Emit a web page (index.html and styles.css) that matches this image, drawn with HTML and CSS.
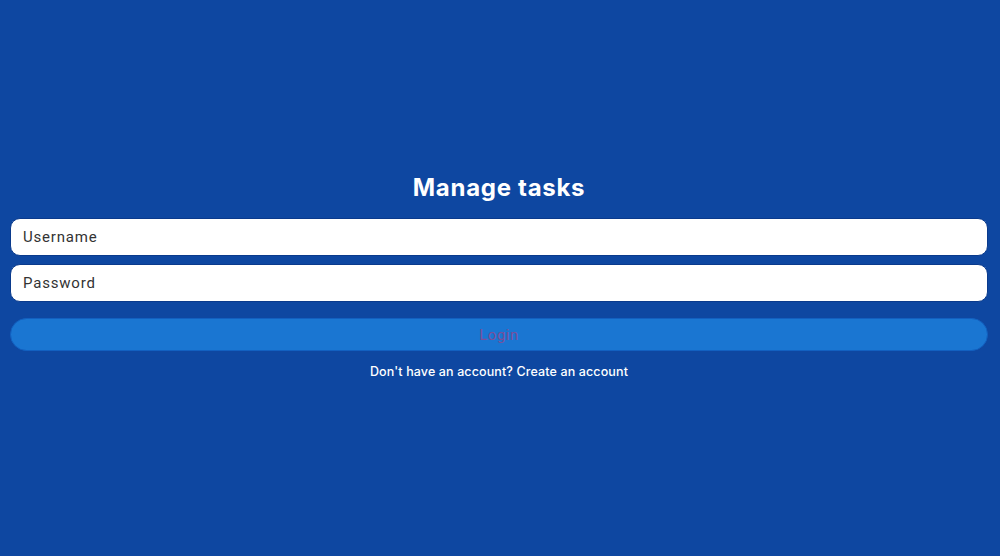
FILE: index.html
```html
<!DOCTYPE html>
<html>
<head>
<meta charset="utf-8">
<link rel="stylesheet" href="styles.css">
</head>
<body>
<main class="page">
  <form class="login">
    <h1 class="title">Manage tasks</h1>
    <input class="field" type="text" placeholder="Username">
    <input class="field" type="password" placeholder="Password">
    <button class="btn" type="button">Login</button>
    <p class="signup">Don't have an account? Create an account</p>
  </form>
</main>
</body>
</html>
```

FILE: styles.css
```css
html, body {
  margin: 0;
  padding: 0;
  height: 100%;
}
body {
  background: #0e47a1;
  font-family: Roboto, "Liberation Sans", sans-serif;
}
.page {
  height: 556px;
  display: flex;
  flex-direction: column;
  justify-content: center;
  padding: 0 12px 0 10px;
  box-sizing: border-box;
}
.login {
  display: flex;
  flex-direction: column;
  margin-top: -2px;
}
.title {
  margin: 0 0 16px;
  text-align: center;
  color: #fff;
  font-family: Inter, "Noto Sans", sans-serif;
  font-weight: 700;
  font-size: 24px;
  letter-spacing: 0.7px;
  line-height: 28px;
}
.field {
  height: 38px;
  box-sizing: border-box;
  border: 1px solid #0a3a8c;
  border-radius: 10px;
  background: #fff;
  padding: 0 12px;
  font-family: Roboto, sans-serif;
  font-size: 15px;
  letter-spacing: 0.8px;
  margin: 0 0 8px;
  outline: none;
}
.field::placeholder {
  color: #333;
}
.btn {
  margin-top: 8px;
  height: 33px;
  border: 1px solid #1260c0;
  border-radius: 17px;
  background: #1a76d2;
  color: #7a4f9a;
  font-family: Roboto, sans-serif;
  font-size: 15px;
  letter-spacing: 0.5px;
}
.signup {
  margin: 13px 0 0;
  text-align: center;
  color: #fff;
  font-family: Inter, "Noto Sans", sans-serif;
  font-weight: 500;
  font-size: 12.5px;
  letter-spacing: 0.12px;
  line-height: 16px;
}
```
